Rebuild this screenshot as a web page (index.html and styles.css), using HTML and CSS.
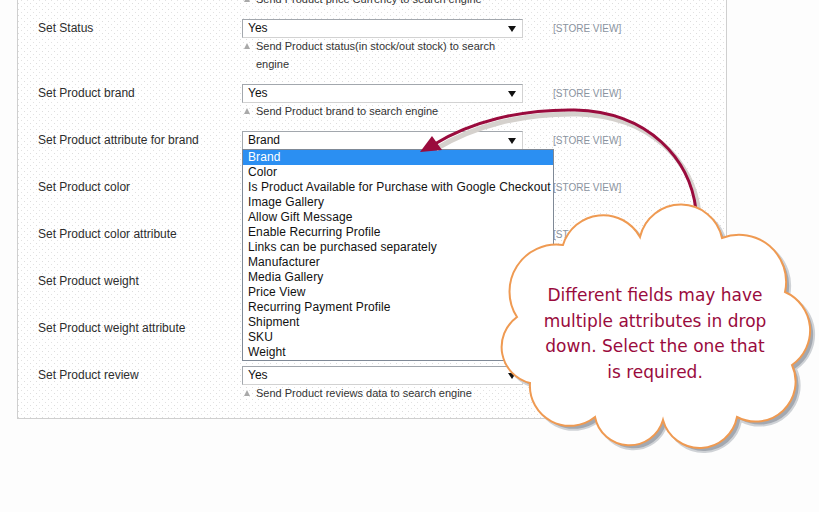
FILE: index.html
```html
<!DOCTYPE html>
<html>
<head>
<meta charset="utf-8">
<title>Product feed settings</title>
<link rel="stylesheet" href="styles.css">
</head>
<body>
<div class="page">
  <div class="panel">
    <div class="row">
      <div class="label"></div>
      <div class="value">
        <p class="note"><span class="tri"></span><span>Send Product price Currency to search engine</span></p>
      </div>
      <div class="scope"></div>
    </div>

    <div class="row">
      <div class="label">Set Status</div>
      <div class="value">
        <div class="select"><span>Yes</span><i class="arrow"></i></div>
        <p class="note"><span class="tri"></span><span>Send Product status(in stock/out stock) to search<br>engine</span></p>
      </div>
      <div class="scope">[STORE VIEW]</div>
    </div>

    <div class="row">
      <div class="label">Set Product brand</div>
      <div class="value">
        <div class="select"><span>Yes</span><i class="arrow"></i></div>
        <p class="note"><span class="tri"></span><span>Send Product brand to search engine</span></p>
      </div>
      <div class="scope">[STORE VIEW]</div>
    </div>

    <div class="row">
      <div class="label">Set Product attribute for brand</div>
      <div class="value">
        <div class="select open"><span>Brand</span><i class="arrow"></i>
          <ul class="list">
            <li class="sel">Brand</li>
            <li>Color</li>
            <li>Is Product Available for Purchase with Google Checkout</li>
            <li>Image Gallery</li>
            <li>Allow Gift Message</li>
            <li>Enable Recurring Profile</li>
            <li>Links can be purchased separately</li>
            <li>Manufacturer</li>
            <li>Media Gallery</li>
            <li>Price View</li>
            <li>Recurring Payment Profile</li>
            <li>Shipment</li>
            <li>SKU</li>
            <li>Weight</li>
          </ul>
        </div>
        <p class="note empty"></p>
      </div>
      <div class="scope">[STORE VIEW]</div>
    </div>

    <div class="row">
      <div class="label">Set Product color</div>
      <div class="value">
        <div class="select"></div>
        <p class="note empty"></p>
      </div>
      <div class="scope">[STORE VIEW]</div>
    </div>

    <div class="row">
      <div class="label">Set Product color attribute</div>
      <div class="value">
        <div class="select"></div>
        <p class="note empty"></p>
      </div>
      <div class="scope">[STORE VIEW]</div>
    </div>

    <div class="row">
      <div class="label">Set Product weight</div>
      <div class="value">
        <div class="select"></div>
        <p class="note empty"></p>
      </div>
      <div class="scope"></div>
    </div>

    <div class="row">
      <div class="label">Set Product weight attribute</div>
      <div class="value">
        <div class="select"></div>
        <p class="note empty"></p>
      </div>
      <div class="scope"></div>
    </div>

    <div class="row">
      <div class="label">Set Product review</div>
      <div class="value">
        <div class="select"><span>Yes</span><i class="arrow"></i></div>
        <p class="note"><span class="tri"></span><span>Send Product reviews data to search engine</span></p>
      </div>
      <div class="scope"></div>
    </div>
  </div>

  <svg class="overlay" width="819" height="512" viewBox="0 0 819 512">
    <path d="M699,213 C693,163 653,116 578,114 C523,113 473,126 436,149" fill="none" stroke="#d5d1cd" stroke-width="5"/>
    <path d="M696,210 C690,160 650,112 575,110 C520,109 470,122 433,145" fill="none" stroke="#9a0b3d" stroke-width="3"/>
    <polygon points="420,152 432,136 442,150" fill="#9a0b3d"/>
    <path transform="translate(4,4)" d="M563,245 A42,42 0 0 1 640,237 A42,42 0 0 1 722,238 A47,47 0 0 1 785,292 A42,42 0 0 1 792,365 A40,40 0 0 1 737,417 A38,38 0 0 1 663,420 A35,35 0 0 1 595,417 A40,40 0 0 1 530,383 A37,37 0 0 1 517,317 A47,47 0 0 1 563,245 Z" fill="#a3a8b0" stroke="#cfd2d6" stroke-width="2"/>
    <path d="M563,245 A42,42 0 0 1 640,237 A42,42 0 0 1 722,238 A47,47 0 0 1 785,292 A42,42 0 0 1 792,365 A40,40 0 0 1 737,417 A38,38 0 0 1 663,420 A35,35 0 0 1 595,417 A40,40 0 0 1 530,383 A37,37 0 0 1 517,317 A47,47 0 0 1 563,245 Z" fill="#ffffff" stroke="#ef9a52" stroke-width="2"/>
  </svg>

  <div class="callout">Different fields may have<br>multiple attributes in drop<br>down. Select the one that<br>is required.</div>
</div>
</body>
</html>
```

FILE: styles.css
```css
* { box-sizing: border-box; }

html, body {
  margin: 0;
  padding: 0;
  background: #fdfdfd;
}

.page {
  position: relative;
  width: 819px;
  height: 512px;
  overflow: hidden;
  font-family: "Liberation Sans", Arial, sans-serif;
  color: #2e2e2e;
}

.panel {
  margin: -9px 0 0 17px;
  width: 710px;
  padding: 0 0 15px 20px;
  border: 1px solid #cfcfcf;
  border-top: none;
  background-color: #ffffff;
  background-image:
    conic-gradient(at 1px 1px, transparent 270deg, #dddddd 270deg),
    conic-gradient(at 1px 1px, transparent 270deg, #e2e2e2 270deg);
  background-size: 6px 6px, 6px 6px;
  background-position: 0 0, 3px 3px;
}

.row {
  display: grid;
  grid-template-columns: 204px 281px auto;
  margin-bottom: 10px;
}

.row:last-child { margin-bottom: 0; }

.label {
  font-size: 12px;
  line-height: 19px;
  color: #2d2d2d;
}

.scope {
  padding-left: 30px;
  font-size: 10px;
  line-height: 19px;
  color: #8a93a0;
}

.value { position: relative; }

.select {
  position: relative;
  height: 19px;
  border: 1px solid;
  border-color: #a2a7ad #d2d2d2 #d2d2d2 #a2a7ad;
  background: #ffffff;
  font-size: 12px;
  line-height: 17px;
  padding-left: 5px;
  color: #111;
}

.arrow {
  position: absolute;
  right: 6px;
  top: 6px;
  width: 0;
  height: 0;
  border-left: 4px solid transparent;
  border-right: 4px solid transparent;
  border-top: 6px solid #111;
}

.list {
  position: absolute;
  left: -1px;
  top: 17px;
  width: 312px;
  margin: 0;
  padding: 0;
  list-style: none;
  background: #ffffff;
  border: 1px solid #7f8996;
  z-index: 2;
}

.list li {
  height: 15px;
  line-height: 15px;
  padding-left: 5px;
  font-size: 12px;
  letter-spacing: 0.1px;
  color: #111;
  white-space: nowrap;
}

.list li.sel {
  background: #2b8ff2;
  color: #ffffff;
}

.note {
  display: flex;
  margin: -1px 0 1px;
  font-size: 11px;
  line-height: 18px;
  color: #333;
}

.note.empty { height: 18px; }

.tri {
  flex: none;
  width: 14px;
  position: relative;
}

.tri::before {
  content: "";
  position: absolute;
  left: 2px;
  top: 6px;
  width: 0;
  height: 0;
  border-left: 3px solid transparent;
  border-right: 3px solid transparent;
  border-bottom: 6px solid #a9a9a9;
}

.overlay {
  position: absolute;
  left: 0;
  top: 0;
  z-index: 3;
}

.callout {
  position: absolute;
  z-index: 4;
  left: 515px;
  top: 283px;
  width: 280px;
  text-align: center;
  font-family: "DejaVu Sans", sans-serif;
  font-size: 17px;
  line-height: 25.5px;
  color: #9a0b3d;
}
```
